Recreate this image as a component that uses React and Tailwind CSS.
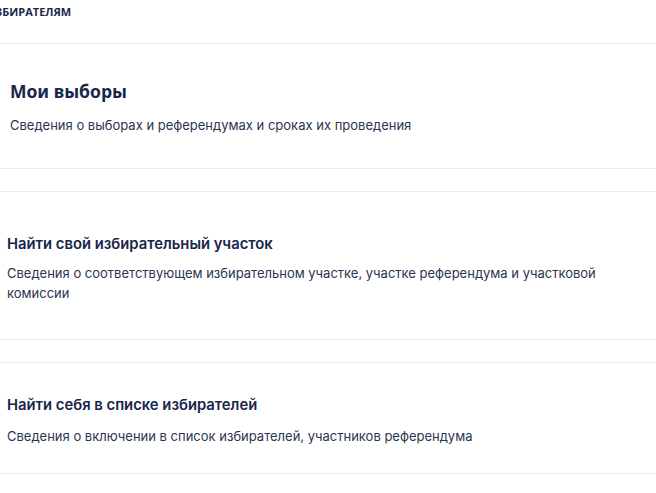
import React from "react";

export default function App() {
  return (
    <div className="w-[656px] h-[493px] bg-white overflow-hidden font-['Inter',sans-serif] text-[#1b2747]">
      <div className="h-[44px] border-b border-[#ebebee] overflow-hidden pt-[4px]">
        <span className="block ml-[-14px] font-['Open_Sans',sans-serif] font-bold text-[11px] leading-[16px] text-[#1b2747] whitespace-nowrap">
          ИЗБИРАТЕЛЯМ
        </span>
      </div>

      <section className="h-[125px] border-b border-[#ebebee] flex flex-col justify-center pl-[10px]">
        <h2 className="font-['Noto_Sans',sans-serif] font-bold text-[17.5px] leading-[28px] text-[#18264a]">
          Мои выборы
        </h2>
        <p className="mt-[10px] text-[13px] leading-[20px] text-[#2a3550]">
          Сведения о выборах и референдумах и сроках их проведения
        </p>
      </section>

      <section className="mt-[22px] h-[149px] border-y border-[#ebebee] flex flex-col justify-center pl-[7px] pt-[3px]">
        <h3 className="font-semibold text-[14.8px] leading-[24px] text-[#18264a]">
          Найти свой избирательный участок
        </h3>
        <p className="mt-[7px] text-[13px] leading-[20px] text-[#2a3550]">
          Сведения о соответствующем избирательном участке, участке референдума и участковой комиссии
        </p>
      </section>

      <section className="mt-[22px] h-[112px] border-y border-[#ebebee] flex flex-col justify-center pl-[7px] pt-[3px]">
        <h3 className="font-semibold text-[14.8px] leading-[24px] text-[#18264a]">
          Найти себя в списке избирателей
        </h3>
        <p className="mt-[9px] text-[13px] leading-[20px] text-[#2a3550]">
          Сведения о включении в список избирателей, участников референдума
        </p>
      </section>
    </div>
  );
}
